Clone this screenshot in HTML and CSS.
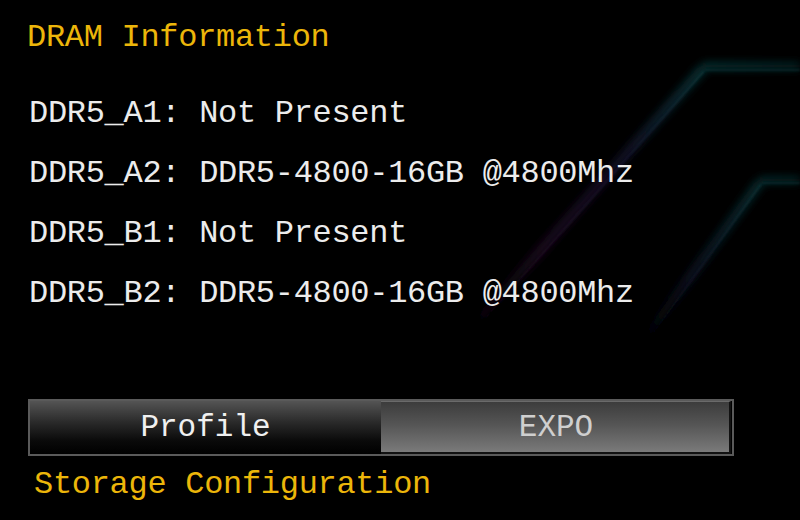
FILE: index.html
```html
<!DOCTYPE html>
<html>
<head>
<meta charset="utf-8">
<link rel="stylesheet" href="styles.css">
</head>
<body>
<div class="screen">
  <svg class="deco" width="800" height="520" viewBox="0 0 800 520">
    <defs>
      <filter id="blur" x="-50%" y="-50%" width="200%" height="200%">
        <feGaussianBlur stdDeviation="4"/>
      </filter>
      <filter id="blur2" x="-50%" y="-50%" width="200%" height="200%">
        <feGaussianBlur stdDeviation="1.2"/>
      </filter>
      <linearGradient id="diag1" x1="703" y1="70" x2="470" y2="330" gradientUnits="userSpaceOnUse">
        <stop offset="0" stop-color="#0d4a4e"/>
        <stop offset="0.35" stop-color="#1e1a3a"/>
        <stop offset="0.7" stop-color="#2a0f2e"/>
        <stop offset="1" stop-color="#000"/>
      </linearGradient>
      <linearGradient id="diag2" x1="760" y1="182" x2="640" y2="340" gradientUnits="userSpaceOnUse">
        <stop offset="0" stop-color="#0c4346"/>
        <stop offset="0.6" stop-color="#131a30"/>
        <stop offset="1" stop-color="#000"/>
      </linearGradient>
      <linearGradient id="hor1" x1="700" y1="0" x2="800" y2="0" gradientUnits="userSpaceOnUse">
        <stop offset="0" stop-color="#0f5356"/>
        <stop offset="1" stop-color="#0a3a3d"/>
      </linearGradient>
    </defs>
    <g filter="url(#blur)" opacity="0.75">
      <path d="M703 66 L800 66" stroke="url(#hor1)" stroke-width="6" fill="none"/>
      <path d="M703 68 L465 335" stroke="url(#diag1)" stroke-width="8" fill="none"/>
      <path d="M760 180 L800 180" stroke="url(#hor1)" stroke-width="6" fill="none"/>
      <path d="M760 182 L640 345" stroke="url(#diag2)" stroke-width="8" fill="none"/>
    </g>
    <g filter="url(#blur2)" opacity="0.65">
      <path d="M705 70 L800 70" stroke="#0e3f42" stroke-width="1.5" fill="none"/>
      <path d="M704 71 L475 330" stroke="url(#diag1)" stroke-width="1.5" fill="none"/>
      <path d="M762 183 L800 183" stroke="#0e3f42" stroke-width="1.5" fill="none"/>
      <path d="M761 184 L648 340" stroke="url(#diag2)" stroke-width="1.5" fill="none"/>
    </g>
  </svg>
  <div class="content">
    <div class="title">DRAM Information</div>
    <ul class="slots">
      <li class="slot">DDR5_A1: Not Present</li>
      <li class="slot">DDR5_A2: DDR5-4800-16GB @4800Mhz</li>
      <li class="slot">DDR5_B1: Not Present</li>
      <li class="slot">DDR5_B2: DDR5-4800-16GB @4800Mhz</li>
    </ul>
    <div class="toggle">
      <div class="seg seg-active">Profile</div>
      <div class="seg seg-value">EXPO</div>
    </div>
    <div class="title title-storage">Storage Configuration</div>
  </div>
</div>
</body>
</html>
```

FILE: styles.css
```css
html, body {
  margin: 0;
  padding: 0;
  background: #000;
}
.screen {
  position: relative;
  width: 800px;
  height: 520px;
  overflow: hidden;
  background: #000;
  font-family: "Liberation Mono", "DejaVu Sans Mono", monospace;
  font-size: 32px;
  letter-spacing: -0.3px;
}
.deco {
  position: absolute;
  left: 0;
  top: 0;
}
.content {
  position: relative;
  padding: 20px 0 0 27px;
}
.title {
  color: #ecb60a;
  line-height: 36px;
  height: 36px;
}
.title-storage {
  margin-top: 11px;
  margin-left: 7px;
}
.slots {
  list-style: none;
  margin: 28px 0 0 0;
  padding: 0 0 0 2px;
}
.slot {
  color: #ececec;
  line-height: 60px;
  height: 60px;
  white-space: pre;
}
.toggle {
  display: grid;
  grid-template-columns: 351px 1fr;
  margin: 75px 0 0 1px;
  width: 702px;
  height: 53px;
  border: 2px solid #5a5a5a;
  background: #000;
  letter-spacing: 0;
}
.seg {
  display: flex;
  align-items: center;
  justify-content: center;
  font-size: 31px;
}
.seg-active {
  color: #f0f0f0;
  background: linear-gradient(#545454 0%, #2a2a2a 40%, #0a0a0a 75%, #000 100%);
}
.seg-value {
  color: #cfcfcf;
  margin-right: 1px;
  padding-left: 2px;
  border-right: 2px solid #111;
  border-bottom: 2px solid #111;
  border-top: 1px solid #6a6a6a;
  background: linear-gradient(#3c3c3c 0%, #555 45%, #7a7a7a 100%);
}
```
